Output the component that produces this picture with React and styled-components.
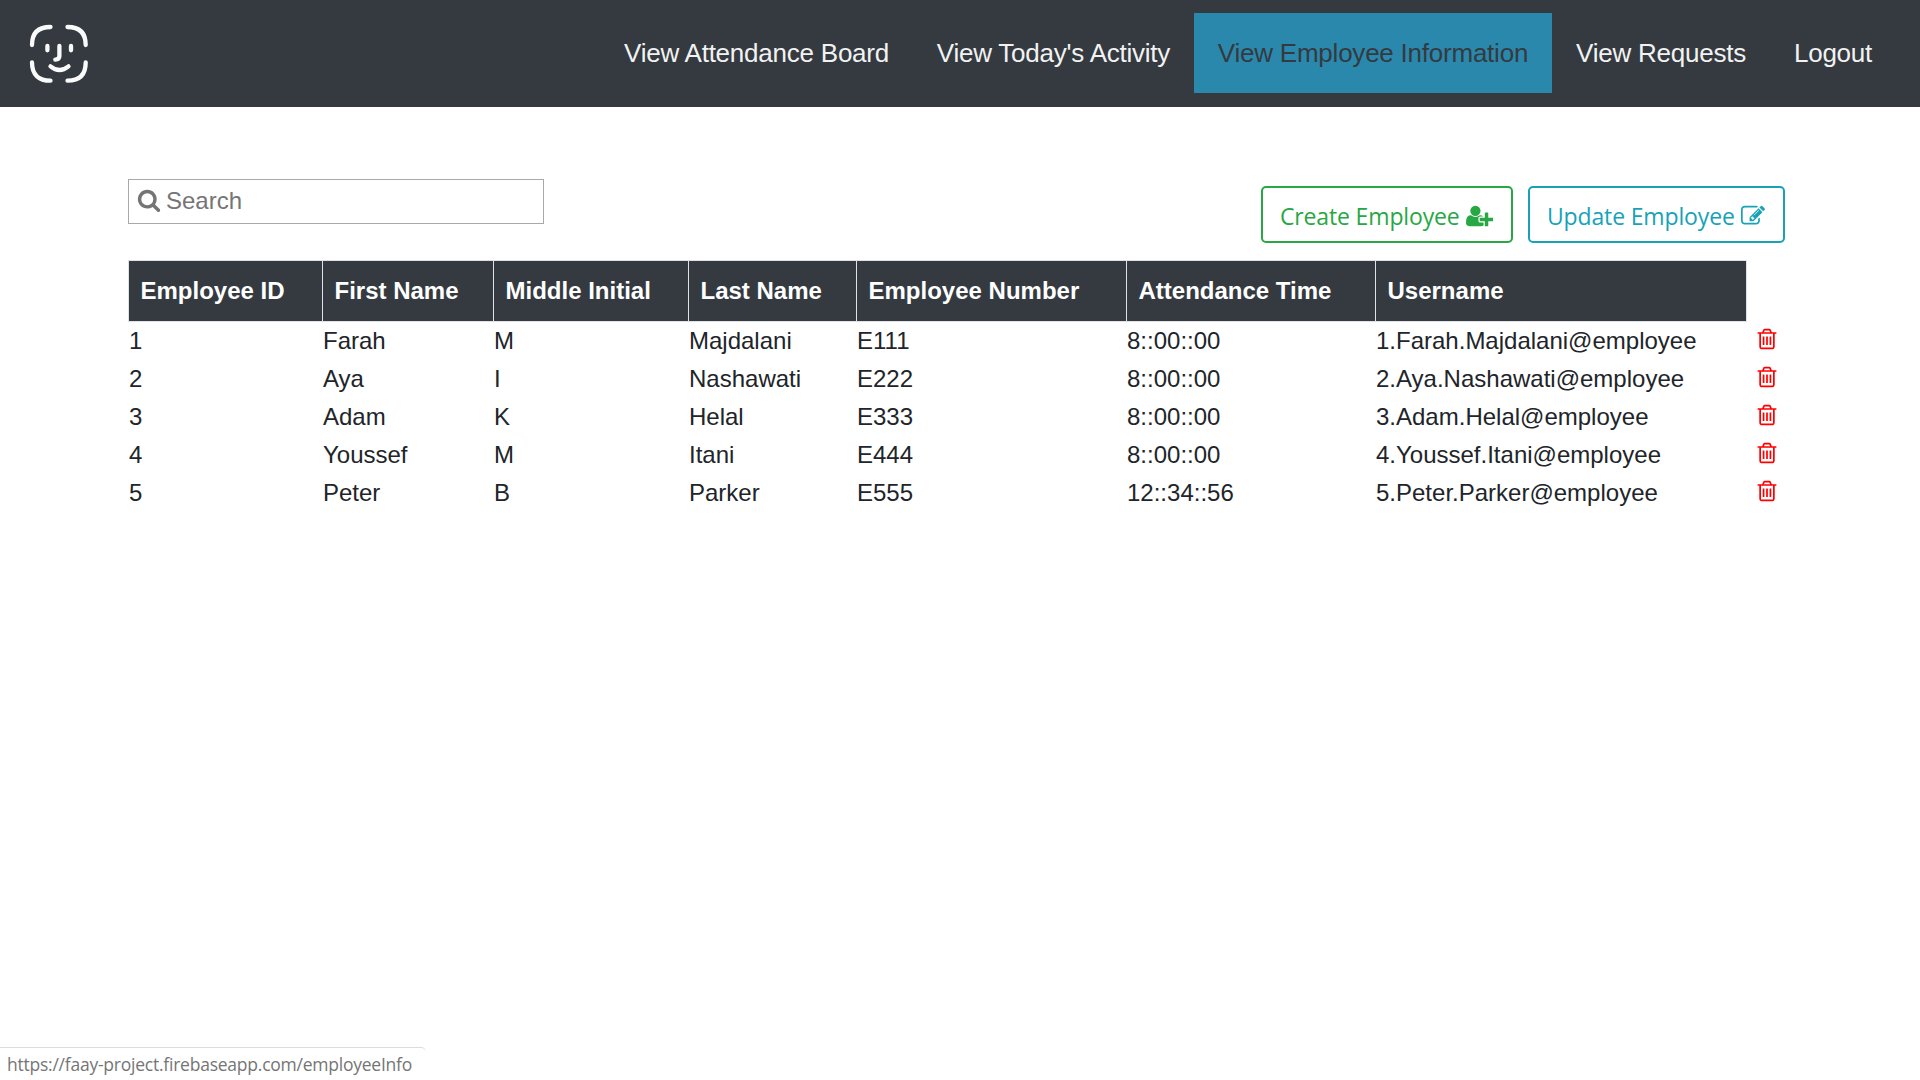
import React from "react";
import styled, { createGlobalStyle } from "styled-components";

const SANS = '"Liberation Sans", Arial, sans-serif';
const UI = '"Open Sans", "Noto Sans", sans-serif';

const GlobalStyle = createGlobalStyle`
  *, *::before, *::after { box-sizing: border-box; }
  body {
    margin: 0;
    background: #fff;
    color: #212529;
    font-family: ${SANS};
    overflow: hidden;
  }
`;

const Page = styled.div`
  display: flex;
  flex-direction: column;
  height: 100vh;
`;

const Navbar = styled.header`
  display: flex;
  align-items: flex-start;
  justify-content: space-between;
  height: 107px;
  flex: none;
  padding: 13px 24px 0 29px;
  background: #343a40;
`;

const Logo = styled.svg`
  width: 60px;
  height: 60px;
  margin-top: 11px;
  fill: none;
  stroke: #fafafa;
  stroke-width: 4.3;
  stroke-linecap: round;
  stroke-linejoin: round;
`;

const NavLinks = styled.nav`
  display: flex;
`;

const NavLink = styled.a`
  display: flex;
  align-items: center;
  justify-content: center;
  width: ${(p) => p.$width}px;
  height: 80px;
  padding-top: 1px;
  font-size: 26px;
  letter-spacing: -0.23px;
  white-space: nowrap;
  color: ${(p) => (p.$active ? "#343a40" : "#f2f2f2")};
  background: ${(p) => (p.$active ? "#2b88ad" : "transparent")};
`;

const Main = styled.main`
  flex: 1;
  padding: 72px 135px 0 128px;
`;

const Toolbar = styled.div`
  display: flex;
  align-items: flex-start;
  justify-content: space-between;
  height: 81px;
`;

const SearchBox = styled.label`
  display: flex;
  align-items: center;
  gap: 5px;
  width: 416px;
  height: 45px;
  padding: 0 7px 2px 8px;
  border: 1px solid #a9a9a9;
  color: #757575;
`;

const SearchInput = styled.input`
  flex: 1;
  min-width: 0;
  padding: 0;
  border: 0;
  outline: 0;
  background: transparent;
  font: 24px ${SANS};
  &::placeholder { color: #757575; opacity: 1; }
`;

const Actions = styled.div`
  display: flex;
  gap: 15px;
  padding-top: 7px;
`;

const ActionButton = styled.button`
  display: flex;
  align-items: center;
  justify-content: space-between;
  width: ${(p) => p.$width}px;
  height: 57px;
  padding: 2px 18px 0 17px;
  border: 2px solid ${(p) => p.$color};
  border-radius: 5px;
  background: #fff;
  color: ${(p) => p.$color};
  font-family: ${UI};
  font-size: 23px;
  letter-spacing: -0.15px;
  white-space: nowrap;
`;

const Icon = styled.svg`
  display: block;
  flex: none;
  width: ${(p) => p.$width || 24}px;
  height: 24px;
  margin-bottom: ${(p) => p.$lift || 0}px;
  fill: currentColor;
`;

const Table = styled.table`
  width: 1657px;
  table-layout: fixed;
  border-collapse: separate;
  border-spacing: 0;
  font-size: 24px;
`;

const HeadCell = styled.th`
  height: 62px;
  padding: 0 0 0 11.5px;
  border: solid #dee2e6;
  border-width: 1px ${(p) => (p.$last ? "1px" : "0")} 1px 1px;
  background: #343a40;
  color: #fff;
  text-align: left;
  white-space: nowrap;
`;

const BlankCell = styled.th`
  padding: 0;
`;

const Cell = styled.td`
  height: 38px;
  padding: 0 0 0 1px;
  line-height: 36px;
  white-space: nowrap;
`;

const DeleteCell = styled(Cell)`
  padding: 0 0 4px 8px;
  color: #f00;
`;

const StatusBar = styled.footer`
  display: flex;
  align-items: center;
  flex: none;
  width: 426px;
  height: 33px;
  padding: 0 0 0 7px;
  border-top: 1px solid #dcdcdc;
  border-top-right-radius: 5px;
  color: #757575;
  font-family: ${UI};
  font-size: 17.5px;
  letter-spacing: -0.235px;
  white-space: nowrap;
`;

const PATHS = {
  search:
    "M1216 832q0-185-131.5-316.5t-316.5-131.5-316.5 131.5-131.5 316.5 131.5 316.5 316.5 131.5 316.5-131.5 131.5-316.5zm512 832q0 52-38 90t-90 38q-54 0-90-38l-343-342q-179 124-399 124-143 0-273.5-55.5t-225-150-150-225-55.5-273.5 55.5-273.5 150-225 225-150 273.5-55.5 273.5 55.5 225 150 150 225 55.5 273.5q0 220-124 399l343 343q37 37 37 90z",
  userPlus:
    "M704 896q-159 0-271.5-112.5t-112.5-271.5 112.5-271.5 271.5-112.5 271.5 112.5 112.5 271.5-112.5 271.5-271.5 112.5zm960 128h352q13 0 22.5 9.5t9.5 22.5v192q0 13-9.5 22.5t-22.5 9.5h-352v352q0 13-9.5 22.5t-22.5 9.5h-192q-13 0-22.5-9.5t-9.5-22.5v-352h-352q-13 0-22.5-9.5t-9.5-22.5v-192q0-13 9.5-22.5t22.5-9.5h352v-352q0-13 9.5-22.5t22.5-9.5h192q13 0 22.5 9.5t9.5 22.5v352zm-736 224q0 52 38 90t90 38h256v238q-68 50-171 50h-874q-121 0-194-69t-73-190q0-53 3.5-103.5t14-109 26.5-108.5 43-97.5 62-81 85.5-53.5 111.5-20q19 0 39 17 79 61 154.5 91.5t164.5 30.5 164.5-30.5 154.5-91.5q20-17 39-17 132 0 217 96h-223q-52 0-90 38t-38 90v192z",
  edit:
    "M888 1184l116-116-152-152-116 116v56h96v96h56zm440-720q-16-16-33 1l-350 350q-17 17-1 33t33-1l350-350q17-17 1-33zm80 594v190q0 119-84.5 203.5t-203.5 84.5h-832q-119 0-203.5-84.5t-84.5-203.5v-832q0-119 84.5-203.5t203.5-84.5h832q63 0 117 25 15 7 18 23 3 17-9 29l-49 49q-14 14-32 8-23-6-45-6h-832q-66 0-113 47t-47 113v832q0 66 47 113t113 47h832q66 0 113-47t47-113v-126q0-13 9-22l64-64q15-15 35-7t20 29zm-96-738l288 288-672 672h-288v-288zm444 132l-92 92-288-288 92-92q28-28 68-28t68 28l152 152q28 28 28 68t-28 68z",
  trash:
    "M704 736v576q0 14-9 23t-23 9h-64q-14 0-23-9t-9-23v-576q0-14 9-23t23-9h64q14 0 23 9t9 23zm256 0v576q0 14-9 23t-23 9h-64q-14 0-23-9t-9-23v-576q0-14 9-23t23-9h64q14 0 23 9t9 23zm256 0v576q0 14-9 23t-23 9h-64q-14 0-23-9t-9-23v-576q0-14 9-23t23-9h64q14 0 23 9t9 23zm128 724v-948h-896v948q0 22 7 40.5t14.5 27 10.5 8.5h832q3 0 10.5-8.5t14.5-27 7-40.5zm-672-1076h448l-48-117q-7-9-17-11h-317q-10 2-17 11zm928 32v64q0 14-9 23t-23 9h-96v948q0 83-47 143.5t-113 60.5h-832q-66 0-113-58.5t-47-141.5v-952h-96q-14 0-23-9t-9-23v-64q0-14 9-23t23-9h309l70-167q15-37 54-63t79-26h320q40 0 79 26t54 63l70 167h309q14 0 23 9t9 23z",
};

const LINKS = [
  { label: "View Attendance Board", width: 313 },
  { label: "View Today's Activity", width: 281 },
  { label: "View Employee Information", width: 358, active: true },
  { label: "View Requests", width: 218 },
  { label: "Logout", width: 126 },
];

const COLUMNS = [
  ["Employee ID", 194],
  ["First Name", 171],
  ["Middle Initial", 195],
  ["Last Name", 168],
  ["Employee Number", 270],
  ["Attendance Time", 249],
  ["Username", 372],
];

const EMPLOYEES = [
  ["1", "Farah", "M", "Majdalani", "E111", "8::00::00", "1.Farah.Majdalani@employee"],
  ["2", "Aya", "I", "Nashawati", "E222", "8::00::00", "2.Aya.Nashawati@employee"],
  ["3", "Adam", "K", "Helal", "E333", "8::00::00", "3.Adam.Helal@employee"],
  ["4", "Youssef", "M", "Itani", "E444", "8::00::00", "4.Youssef.Itani@employee"],
  ["5", "Peter", "B", "Parker", "E555", "12::34::56", "5.Peter.Parker@employee"],
];

export default function App() {
  return (
    <Page>
      <GlobalStyle />
      <Navbar>
        <Logo viewBox="29 24 60 60">
          <path d="M32 45C32 33 38.5 27 50.5 27M67.5 27C79.5 27 85.7 33 85.7 45M32 62.5C32 74.5 38.5 80.7 50.5 80.7M67.5 80.7C79.5 80.7 85.7 74.5 85.7 62.5" />
          <path d="M47.4 46V50.3M71 46V50.3M59.4 46V56Q59.4 59.5 55.3 59.6M50.5 66.3Q59.5 73.7 68.5 66.3" />
        </Logo>
        <NavLinks>
          {LINKS.map((l) => (
            <NavLink key={l.label} $width={l.width} $active={l.active}>
              {l.label}
            </NavLink>
          ))}
        </NavLinks>
      </Navbar>
      <Main>
        <Toolbar>
          <SearchBox>
            <Icon viewBox="0 0 1792 1792" $lift={1}>
              <path d={PATHS.search} />
            </Icon>
            <SearchInput placeholder="Search" />
          </SearchBox>
          <Actions>
            <ActionButton $color="#28a745" $width={252}>
              Create Employee
              <Icon viewBox="0 0 2048 1792" $width={27.4}>
                <path d={PATHS.userPlus} />
              </Icon>
            </ActionButton>
            <ActionButton $color="#17a2b8" $width={257}>
              Update Employee
              <Icon viewBox="0 0 1792 1792">
                <path d={PATHS.edit} />
              </Icon>
            </ActionButton>
          </Actions>
        </Toolbar>
        <Table>
          <colgroup>
            {COLUMNS.map(([name, width]) => (
              <col key={name} width={width} />
            ))}
            <col />
          </colgroup>
          <thead>
            <tr>
              {COLUMNS.map(([name], i) => (
                <HeadCell key={name} $last={i === COLUMNS.length - 1}>
                  {name}
                </HeadCell>
              ))}
              <BlankCell />
            </tr>
          </thead>
          <tbody>
            {EMPLOYEES.map((row) => (
              <tr key={row[0]}>
                {row.map((value, i) => (
                  <Cell key={i}>{value}</Cell>
                ))}
                <DeleteCell>
                  <Icon viewBox="0 0 1792 1792">
                    <path d={PATHS.trash} />
                  </Icon>
                </DeleteCell>
              </tr>
            ))}
          </tbody>
        </Table>
      </Main>
      <StatusBar>https://faay-project.firebaseapp.com/employeeInfo</StatusBar>
    </Page>
  );
}
